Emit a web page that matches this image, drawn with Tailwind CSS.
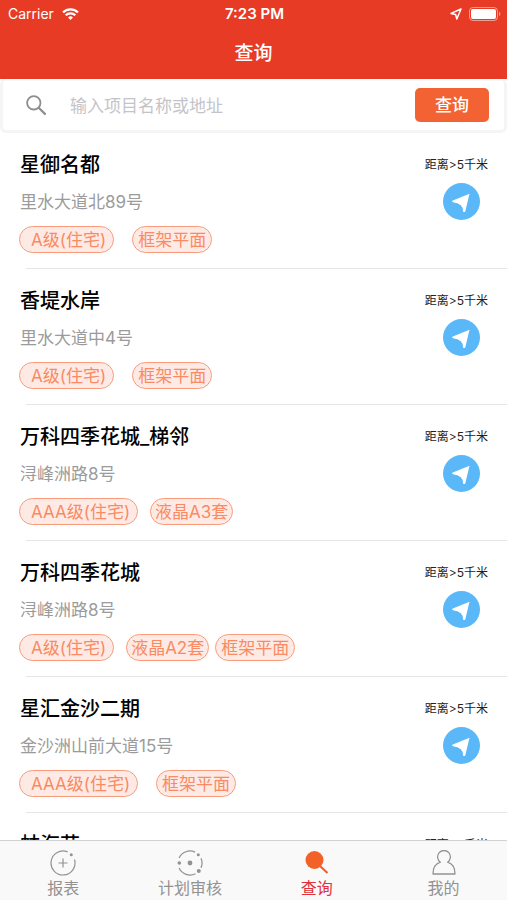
<!DOCTYPE html>
<html lang="zh-CN">
<head>
  <meta charset="UTF-8" />
  <meta name="viewport" content="width=device-width, initial-scale=1.0"/>
  <script src="https://cdn.jsdelivr.net/npm/@tailwindcss/browser@4"></script>
  <title>查询</title>
</head>
<body class="h-screen flex flex-col overflow-hidden bg-white font-[Inter,'Noto_Sans_CJK_SC',sans-serif]">

  <header class="shrink-0 bg-[#e73b25] text-white">
    <div class="grid grid-cols-3 items-center h-7 pl-2 pr-[6px] text-sm">
      <div class="flex items-center gap-2">
        <span>Carrier</span>
        <svg class="w-[17px] h-3" viewBox="0 0 17 12" fill="none" stroke="currentColor" stroke-width="2.2">
          <path d="M1 4.4a10.8 10.8 0 0 1 15 0"/>
          <path d="M3.7 7.2a7 7 0 0 1 9.6 0"/>
          <path d="M8.5 12L6 9.4a3.6 3.6 0 0 1 5 0z" fill="currentColor" stroke="none"/>
        </svg>
      </div>
      <span class="text-center text-[15px] font-semibold">7:23 PM</span>
      <div class="flex items-center justify-end gap-[7px]">
        <svg class="w-3 h-3" viewBox="0 0 12 12" fill="none" stroke="currentColor" stroke-width="1.5" stroke-linejoin="round">
          <path d="M11 1L1 5.4l4.6 1L6.8 11z"/>
        </svg>
        <svg class="w-8 h-[14px]" viewBox="0 0 32 14">
          <rect x="0.5" y="0.5" width="28" height="13" rx="3.5" fill="none" stroke="#fff" stroke-opacity="0.5"/>
          <rect x="2" y="2" width="25" height="10" rx="2" fill="#fff"/>
          <path d="M30 4.8a2.4 2.4 0 0 1 0 4.4z" fill="#fff" fill-opacity="0.5"/>
        </svg>
      </div>
    </div>
    <h1 class="h-[51px] leading-[52px] text-center text-[19px] font-medium">查询</h1>
  </header>

  <form class="shrink-0 flex items-center h-[54px] pl-[23px] pr-[15px] border-3 border-t-0 border-[#f4f5f6] rounded-md">
    <label for="keyword" class="w-11">
      <svg class="w-5 h-5" viewBox="0 0 20 20" fill="none" stroke="#8e8e8e" stroke-width="1.8" stroke-linecap="round">
        <circle cx="7.8" cy="7.8" r="6.7"/>
        <path d="M12.7 12.7l6.2 6.2" stroke-width="2.2"/>
      </svg>
    </label>
    <input id="keyword" type="text" placeholder="输入项目名称或地址" class="flex-1 min-w-0 h-9 pt-[2px] text-[17px] outline-none placeholder:text-[#c4c4c8]" />
    <button type="button" class="w-[74px] h-[34px] pt-[2px] rounded-[5px] bg-[#f26232] text-white text-[17px] font-medium">查询</button>
  </form>

  <main id="list" class="flex-1 min-h-0 overflow-hidden"></main>

  <nav class="shrink-0 grid grid-cols-4 h-[60px] border-t border-[#d2d2d2] bg-[#f9f9f9] text-[#929292] text-base">
    <a href="#" class="flex flex-col items-center pt-[9px]">
      <svg class="w-[26px] h-[26px]" viewBox="0 0 26 26" fill="none" stroke="currentColor" stroke-width="1.2">
        <path d="M17.6 1.9A12 12 0 1 0 24.5 9.5"/>
        <path d="M13 8.5v9M8.5 13h9"/>
        <circle cx="21.3" cy="4.8" r="1.5" fill="currentColor" stroke="none"/>
      </svg>
      <span class="leading-6">报表</span>
    </a>
    <a href="#" class="flex flex-col items-center pt-[9px]">
      <svg class="w-[26px] h-[26px]" viewBox="0 0 26 26" fill="none" stroke="currentColor" stroke-width="1.2">
        <path d="M2.1 8A12 12 0 0 1 18 2.1M24 8.2A12 12 0 0 1 24 17.8M18.5 23.7A12 12 0 0 1 2.1 18"/>
        <g fill="currentColor" stroke="none">
          <circle cx="13" cy="13" r="2.4"/>
          <circle cx="2.3" cy="13" r="1.8"/>
          <circle cx="21.3" cy="4.8" r="1.5"/>
          <circle cx="21.8" cy="21" r="2"/>
        </g>
      </svg>
      <span class="leading-6">计划审核</span>
    </a>
    <a href="#" class="flex flex-col items-center pt-[9px] text-[#e0323c]">
      <svg class="w-[26px] h-[26px]" viewBox="0 0 26 26" fill="#f26228">
        <circle cx="10.5" cy="10" r="9"/>
        <path d="M16 16l7.5 7" stroke="#f26228" stroke-width="2.2"/>
      </svg>
      <span class="leading-6">查询</span>
    </a>
    <a href="#" class="flex flex-col items-center pt-[9px]">
      <svg class="w-[26px] h-[26px]" viewBox="0 0 26 26" fill="none" stroke="currentColor" stroke-width="1.3" stroke-linejoin="round">
        <path d="M9.4 12.2a6.4 6.4 0 1 1 7.2 0c4.6 1.4 7.4 5.6 7.4 11.8h-22c0-6.2 2.800-10.400 7.400-11.800z"/>
      </svg>
      <span class="leading-6">我的</span>
    </a>
  </nav>

  <script>
    const projects = [
      { name: "星御名都", address: "里水大道北89号", level: "A级(住宅)", frame: "框架平面" },
      { name: "香堤水岸", address: "里水大道中4号", level: "A级(住宅)", frame: "框架平面" },
      { name: "万科四季花城_梯邻", address: "浔峰洲路8号", level: "AAA级(住宅)", lcd: "液晶A3套" },
      { name: "万科四季花城", address: "浔峰洲路8号", level: "A级(住宅)", lcd: "液晶A2套", frame: "框架平面" },
      { name: "星汇金沙二期", address: "金沙洲山前大道15号", level: "AAA级(住宅)", frame: "框架平面" },
      { name: "蚌海花", address: "", level: "A级(住宅)", frame: "框架平面" }
    ]

    const tagClass = "h-[27px] leading-[27px] border border-[#f99b7a] rounded-full bg-[#feeae5] text-[#f98a64] text-[17px] whitespace-nowrap"

    function tag(text, extra) {
      return text ? `<span class="${tagClass} ${extra}">${text}</span>` : ""
    }

    document.getElementById("list").innerHTML = projects.map(p => `
      <article class="relative h-[136px] pt-[18px] px-5 flex justify-between">
        <div>
          <h2 class="text-[20px] leading-7 font-medium text-black">${p.name}</h2>
          <p class="mt-[11px] h-6 text-[17px] leading-6 text-[#9b9b9b]">${p.address}</p>
          <div class="mt-3 -ml-px flex">
            ${tag(p.level, "pl-[11px] pr-[7px]")}
            <div class="ml-3 mr-[6px] flex">${tag(p.lcd, "px-1")}</div>
            ${tag(p.frame, "px-[5px]")}
          </div>
        </div>
        <div class="flex flex-col items-end">
          <span class="-mr-px text-xs leading-7 text-[#222]">距离&gt;5千米</span>
          <button type="button" aria-label="导航" class="mt-1 mr-[7px] w-[37px] h-[37px] rounded-full bg-[#5bb8f8]">
            <svg class="w-[37px] h-[37px]" viewBox="0 0 37 37" fill="#fff">
              <path d="M26.5 10.7L22.300 28.200q-1 1.600-2.200 0.200Q20.600 20.600 9.800 19.200q-1.500-0.800 0-1.600z"/>
            </svg>
          </button>
        </div>
        <div class="absolute bottom-0 left-[26px] right-0 h-px bg-[#e6e6e6]"></div>
      </article>`).join("")
  </script>
</body>
</html>
